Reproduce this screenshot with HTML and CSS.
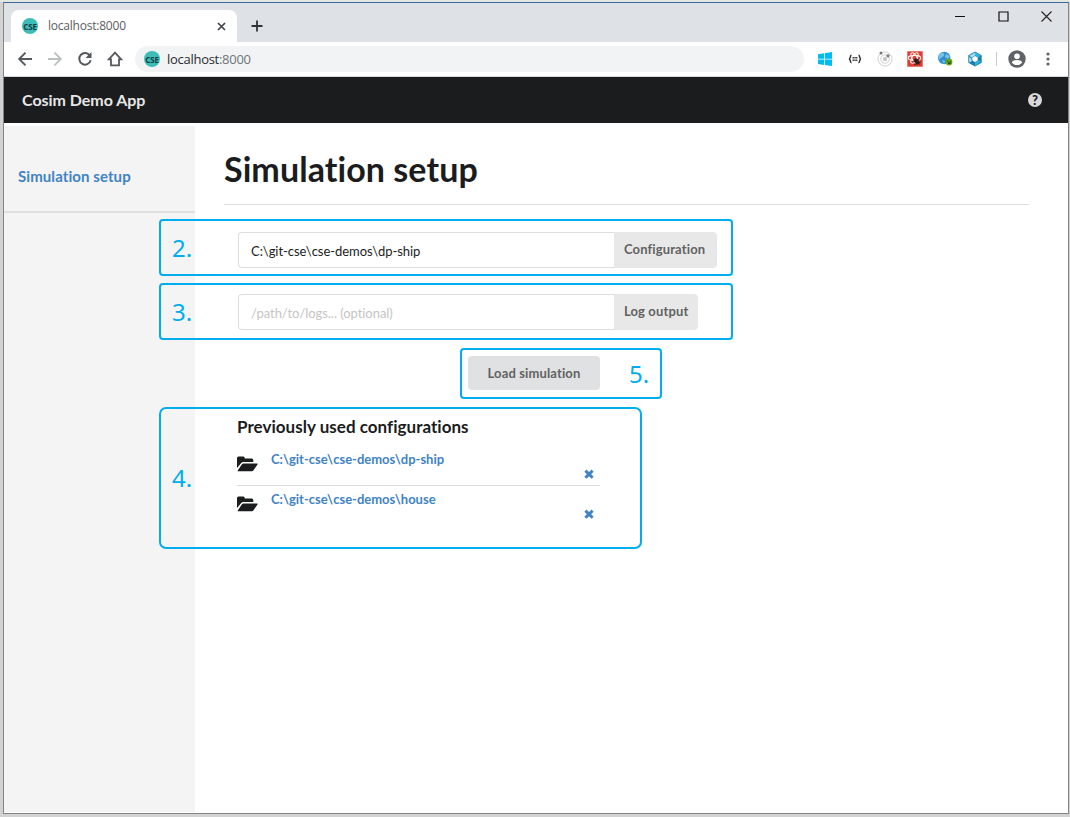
FILE: index.html
```html
<!DOCTYPE html>
<html lang="en">
<head>
<meta charset="utf-8">
<title>Cosim Demo App</title>
<link rel="stylesheet" href="styles.css">
</head>
<body>
<div class="window">
  <div class="tabstrip">
    <div class="tab">
      <span class="favicon">CSE</span>
      <span class="tab-title">localhost:8000</span>
      <svg class="tab-close" width="9" height="9" viewBox="0 0 9 9"><path d="M1 1l7 7M8 1l-7 7" stroke="#3c4043" stroke-width="1.6"/></svg>
    </div>
    <svg class="new-tab" width="12" height="12" viewBox="0 0 12 12"><path d="M6 .5v11M.5 6h11" stroke="#2f3236" stroke-width="1.8"/></svg>
    <div class="controls">
      <svg width="11" height="11" viewBox="0 0 11 11"><path d="M.5 5.500h10" transform="translate(-.5 0)" stroke="#111"/></svg>
      <svg width="11" height="11" viewBox="0 0 11 11"><path d="M1 1h9v9H1z" fill="none" stroke="#111" stroke-width="1.2"/></svg>
      <svg width="11" height="11" viewBox="0 0 11 11"><path d="M.5 .5l10 10M10.500 .5l-10 10" stroke="#222" stroke-width="1.1"/></svg>
    </div>
  </div>
  <div class="toolbar">
    <div class="nav">
      <svg width="16" height="16" viewBox="0 0 16 16"><path d="M15 8H2.500M8.500 1.700L2.200 8l6.300 6.300" fill="none" stroke="#55585c" stroke-width="1.9"/></svg>
      <svg width="16" height="16" viewBox="0 0 16 16"><path d="M1 8h12.500M7.500 1.700L13.800 8l-6.300 6.300" fill="none" stroke="#bdbfc1" stroke-width="1.9"/></svg>
      <svg width="16" height="16" viewBox="0 0 16 16"><path d="M13 4.700A5.800 5.800 0 1 0 13.700 9.300" fill="none" stroke="#55585c" stroke-width="2"/><path d="M14.500 1v6h-6z" fill="#55585c"/></svg>
      <svg width="16" height="16" viewBox="0 0 16 16"><path d="M8 1.700L1.800 8.400H4v6h8v-6h2.200z" fill="none" stroke="#55585c" stroke-width="1.8"/></svg>
    </div>
    <div class="omnibox"><span class="favicon">CSE</span><span class="url">localhost<span>:8000</span></span></div>
    <div class="extensions">
      <svg width="16" height="16" viewBox="0 0 16 16"><path d="M1 3.200l6-.9v5.400H1zM7.800 2.200L15 1v6.700H7.800zM1 8.500h6v5.400l-6-.9zM7.800 8.500H15V15l-7.200-1z" fill="#00bcf2"/></svg>
      <svg width="16" height="16" viewBox="0 0 16 16"><path d="M4.500 4.300C2.600 4.300 4 7.700 2 8c2 .3.600 3.700 2.500 3.700M11.500 4.300C13.400 4.300 12 7.700 14 8c-2 .3-.6 3.700-2.500 3.700" fill="none" stroke="#333" stroke-width="1.500"/><path d="M5.500 6.800h5M5.500 9.200h5" stroke="#444" stroke-width="1.600" stroke-dasharray="2.200 .5"/></svg>
      <svg width="16" height="16" viewBox="0 0 16 16"><g fill="none" stroke="#d0d0d0"><circle cx="8" cy="8" r="7"/><circle cx="8" cy="8" r="4.300"/></g><circle cx="8" cy="8" r="2.200" fill="#c7c7c7"/><circle cx="4" cy="2" r="1.500" fill="#777"/><circle cx="11" cy="4.800" r="1.600" fill="#777"/></svg>
      <svg width="16" height="16" viewBox="0 0 16 16"><path d="M.3.300h15.400v15.400H.3z" fill="#e03c31"/><g fill="none" stroke="#fff0e9" stroke-width="1.100"><ellipse cx="7.500" cy="7" rx="6.300" ry="2.600"/><ellipse cx="7.500" cy="7" rx="2.500" ry="5.800" transform="rotate(30 7.500 7)"/><ellipse cx="7.500" cy="7" rx="2.500" ry="5.800" transform="rotate(-30 7.500 7)"/></g><ellipse cx="9.700" cy="10.500" rx="2.300" ry="3.300" fill="#301c19" transform="rotate(-35 9.700 10.500)"/><path d="M5.500 11l7-3M7 14l7-3M6 8.500l7 5" stroke="#301c19" stroke-width=".8"/></svg>
      <svg width="16" height="16" viewBox="0 0 16 16"><circle cx="7.200" cy="7" r="6.200" fill="#2f91cf"/><path d="M3 2.500c3-2 5 0 4 2S3.500 6 3 8 1 6 1.500 4.500zM9 3l4 2-2 3-3-2zM5 9l3 1-1 3z" fill="#7bc2e9"/><circle cx="12" cy="11" r="3.400" fill="#65a51c"/><path d="M10.200 9.800l2.500 2.500M13.200 10.200v2.300H11" fill="none" stroke="#244d13"/></svg>
      <svg width="16" height="16" viewBox="0 0 16 16"><path d="M8 .5l6.700 3.700v7.600L8 15.500l-6.700-3.700V4.200z" fill="#1b7fae"/><path d="M8 1.500v3L4.500 6.500 2 4.800zM2 6l2.500 1.500v3L2.200 11.500z" fill="#a6dcf0"/><path d="M8 .8l6 3.600-3 2L8 4.500zM14 10.500L8 15v-3.500l3.500-2z" fill="#30b4df"/><path d="M8 5l2.700 1.500v3L8 11 5.300 9.500v-3z" fill="#fff"/></svg>
      <i class="separator"></i>
      <svg class="avatar" width="18" height="18" viewBox="0 0 18 18"><circle cx="9" cy="9" r="8.700" fill="#5f6368"/><circle cx="9" cy="6.200" r="2.800" fill="#fff"/><path d="M3.800 12.500c1.400-3.200 9-3.200 10.400 0-2.300 3.400-8.100 3.400-10.400 0z" fill="#fff"/></svg>
      <svg class="more" width="4" height="14" viewBox="0 0 4 14"><g fill="#5f6368"><circle cx="2" cy="2" r="1.600"/><circle cx="2" cy="7" r="1.600"/><circle cx="2" cy="12" r="1.600"/></g></svg>
    </div>
  </div>
  <header class="app-header">
    <span class="brand">Cosim Demo App</span>
    <span class="help">?</span>
  </header>
  <div class="app">
    <aside class="sidebar"><a class="side-link">Simulation setup</a></aside>
    <main class="main">
      <h1 class="title"><span>Simulation setup</span></h1>
      <div class="setup">
        <div class="field"><div class="input">C:\git-cse\cse-demos\dp-ship</div><div class="label wide"><span>Configuration</span></div></div>
        <div class="field"><div class="input placeholder">/path/to/logs... (optional)</div><div class="label"><span>Log output</span></div></div>
        <div class="load"><span>Load simulation</span></div>
        <h2 class="subtitle"><span>Previously used configurations</span></h2>
        <div class="item">
          <svg class="folder" width="21" height="16" viewBox="0 0 21 16"><path d="M0 12V2Q0 .5 1.500 .5H6.200Q7.700 .5 7.700 2V2.600H14.800Q16.300 2.600 16.300 4.100V6.100H6.700Q4.800 6.100 3.800 7.500z"/><path d="M6.600 7.600H20.200Q21.100 7.600 20.500 8.500L16.700 14Q16 15.200 14.600 15.200H1.200Q.3 15.200.9 14.300L4.600 8.800Q5.400 7.600 6.600 7.600z"/></svg>
          <a class="path">C:\git-cse\cse-demos\dp-ship</a>
          <svg class="remove" width="10" height="10" viewBox="0 0 10 10"><path d="M1.400 1.600l7.200 7.200M8.600 1.600L1.400 8.800"/></svg>
        </div>
        <div class="item">
          <svg class="folder" width="21" height="16" viewBox="0 0 21 16"><path d="M0 12V2Q0 .5 1.500 .5H6.200Q7.700 .5 7.700 2V2.600H14.800Q16.300 2.600 16.300 4.100V6.100H6.700Q4.800 6.100 3.800 7.500z"/><path d="M6.600 7.600H20.200Q21.100 7.600 20.500 8.500L16.700 14Q16 15.200 14.600 15.200H1.200Q.3 15.200.9 14.300L4.600 8.800Q5.400 7.600 6.600 7.600z"/></svg>
          <a class="path">C:\git-cse\cse-demos\house</a>
          <svg class="remove" width="10" height="10" viewBox="0 0 10 10"><path d="M1.400 1.600l7.200 7.200M8.600 1.600L1.400 8.800"/></svg>
        </div>
      </div>
    </main>
  </div>
</div>
<div class="callout step-2">2.</div>
<div class="callout step-3">3.</div>
<div class="callout step-5">5.</div>
<div class="callout step-4">4.</div>
</body>
</html>
```
FILE: styles.css
```css
* { box-sizing: border-box; }
body {
  margin: 0;
  width: 1070px;
  height: 817px;
  padding: 2px 1px 3px 3px;
  overflow: hidden;
  background: linear-gradient(#e3e7e2 0 2px, #d2d2d2 2px);
  font-family: Lato, sans-serif;
  font-variant-ligatures: none;
  color: #1b1c1d;
}
svg { display: block; flex: none; }
.window {
  display: flex;
  flex-direction: column;
  height: 812px;
  background: #fff;
  border: 1px solid #858585;
  border-top-color: #3a6a94;
}
.tabstrip {
  display: flex;
  height: 39px;
  padding-left: 7px;
  background: #dee1e6;
}
.tab {
  display: flex;
  align-items: center;
  width: 226px;
  height: 32px;
  margin-top: 7px;
  padding: 0 11px;
  border-radius: 8px 8px 0 0;
  background: #fff;
  font: 12px "Open Sans", sans-serif;
  color: #5a5d61;
}
.favicon {
  display: flex;
  align-items: center;
  justify-content: center;
  flex: none;
  width: 16px;
  height: 16px;
  border-radius: 50%;
  background: #3ebdb8;
  color: #163f47;
  font: bold 8px "Open Sans", sans-serif;
  letter-spacing: -.2px;
}
.tab-title { margin: -2px 0 0 10px; letter-spacing: -.22px; }
.tab-close { margin-left: auto; }
.new-tab { margin: 17px 0 0 14px; }
.controls { display: flex; gap: 32px; margin: 8px 16px 0 auto; }
.toolbar {
  display: flex;
  align-items: center;
  height: 35px;
  border-bottom: 1px solid #d4d6d9;
}
.nav { display: flex; gap: 14px; margin-left: 12.5px; }
.omnibox {
  display: flex;
  align-items: center;
  width: 669px;
  height: 26px;
  margin-left: 12.5px;
  padding-left: 9px;
  border-radius: 13px;
  background: #f1f3f4;
  font: 13px "Open Sans", sans-serif;
}
.url { margin-left: 7px; letter-spacing: -.28px; color: #2b2d30; }
.url span { color: #70747a; }
.extensions { display: flex; align-items: center; gap: 14px; margin-left: 13px; }
.separator { width: 1px; height: 14px; margin-right: -3px; margin-left: -1px; background: #c8cacd; }
.more { margin-left: 6px; }
.app-header {
  display: flex;
  align-items: center;
  justify-content: space-between;
  height: 46px;
  padding: 0 26px 0 18px;
  background: #1b1c1d;
  color: #e7e7e7;
}
.brand { margin-top: -2px; font-size: 16px; font-weight: 700; letter-spacing: -.03px; }
.help {
  display: flex;
  align-items: center;
  justify-content: center;
  width: 14px;
  height: 14px;
  border-radius: 50%;
  background: #d9d9d9;
  color: #1b1c1d;
  font: 900 13px Lato, sans-serif;
}
.app { display: flex; flex: 1; padding: 3px 0 1px; }
.sidebar { width: 191px; background: #f4f4f4; }
.side-link {
  display: flex;
  align-items: center;
  height: 87px;
  padding: 15px 0 0 14px;
  border-bottom: 2px solid #dfdfdf;
  color: #4183c4;
  font-size: 15px;
  font-weight: 700;
  letter-spacing: .08px;
}
.main { flex: 1; padding: 0 39px 0 29px; }
.title {
  height: 79px;
  margin: 0;
  padding-top: 22px;
  border-bottom: 1px solid #dedede;
  font-size: 34px;
  line-height: 42px;
  font-weight: 700;
  letter-spacing: .07px;
}
.setup { width: 493px; padding: 27px 0 0 14px; }
.field { display: flex; height: 36px; margin-bottom: 26px; font-size: 13px; }
.input {
  width: 376px;
  padding: 1px 12px 0;
  border: 1px solid #dededf;
  border-right: 0;
  border-radius: 4px 0 0 4px;
  line-height: 35px;
  letter-spacing: -.05px;
}
.placeholder { color: #c5c5c5; }
.label {
  width: 84px;
  padding-left: 10px;
  border-radius: 0 4px 4px 0;
  background: #e8e8e8;
  color: #626262;
  font-weight: 700;
  line-height: 34px;
  letter-spacing: .13px;
}
.wide { width: 103px; }
.load {
  width: 132px;
  height: 34px;
  margin-left: 230px;
  border-radius: 4px;
  background: #e0e1e2;
  color: #626262;
  font-size: 13px;
  font-weight: 700;
  line-height: 34px;
  letter-spacing: .13px;
  text-align: center;
}
.subtitle { height: 30px; margin: 26px 0 0 -1px; font-size: 17px; line-height: 22px; font-weight: 700; letter-spacing: .03px; }
.item {
  display: flex;
  width: 363px;
  height: 39px;
  margin-left: -1px;
  padding: 0 6px 0 0;
}
.item + .item { height: 41px; border-top: 1px solid #dcdcdc; }
.folder { margin-top: 10px; fill: #1b1c1d; }
.path { margin: 5px auto 0 13px; color: #4183c4; font-size: 13px; font-weight: 700; line-height: 16px; letter-spacing: -.01px; }
.remove { margin-top: 23px; fill: none; stroke: #4183c4; stroke-width: 3; }
.callout {
  position: absolute;
  display: flex;
  align-items: center;
  border: 2px solid #00aeef;
  border-radius: 4px;
  padding: 0 0 0 11px;
  color: #00aeef;
  font: 24px "Noto Sans", sans-serif;
}
.step-2, .step-3 { left: 159px; width: 574px; height: 57px; }
.step-2 { top: 219px; }
.step-3 { top: 283px; }
.step-5 { left: 460px; top: 348px; width: 202px; height: 51px; padding-left: 167px; }
.step-4 { left: 159px; top: 407px; width: 483px; height: 142px; padding-bottom: 2px; border-radius: 7px; }
```
